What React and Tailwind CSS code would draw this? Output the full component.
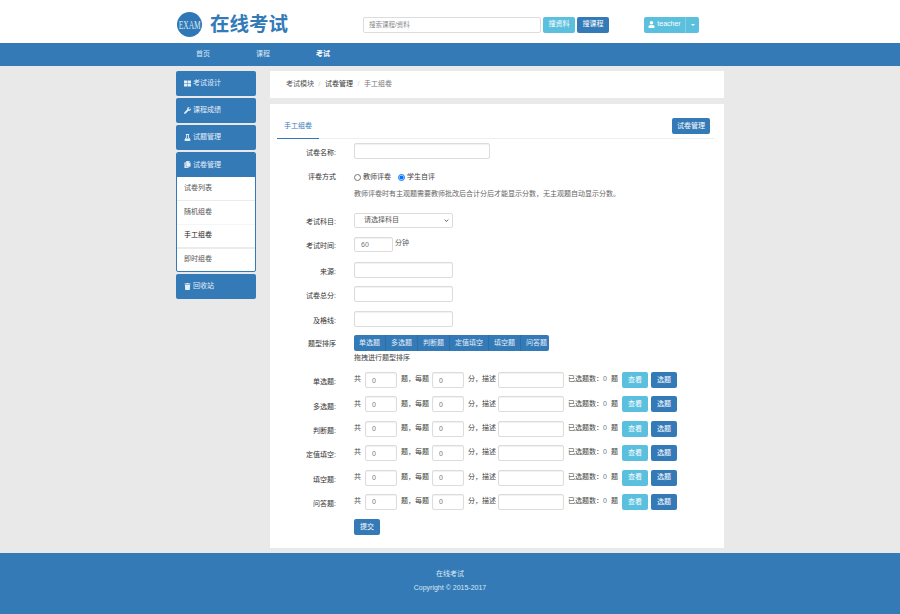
import React from 'react';
import { FaThLarge, FaWrench, FaFlask, FaCopy, FaTrash, FaUser } from 'react-icons/fa';

const types = ['单选题', '多选题', '判断题', '定值填空', '填空题', '问答题'];
const inputCls = 'h-4 rounded-[2px] border border-[#dcdcdc] bg-white px-[6px] text-[7px] text-[#777] shadow-[inset_0_1px_1px_rgba(0,0,0,0.06)] outline-none';
const sideBtn = 'flex h-[24.5px] items-center gap-[2px] rounded-[2px] bg-[#337ab7] pl-[7px] text-[7px] text-[#e4eef7]';
const infoBtn = 'flex h-4 items-center justify-center rounded-[2px] bg-[#5bc0de] text-[7px] text-white';
const primaryBtn = 'flex h-4 items-center justify-center rounded-[2px] bg-[#337ab7] text-[7px] text-white';

function SideItem({ icon, label }) {
    return (
        <div className={sideBtn}>
            <span className="flex w-[8px] justify-center text-[7px]">{icon}</span>
            <span>{label}</span>
        </div>
    );
}

function FormRow({ label, className, labelClass = 'pt-[4px]', children }) {
    return (
        <div className={'flex items-center ' + className}>
            <div className={'w-[66px] shrink-0 text-right text-[7px] text-[#333] ' + labelClass}>{label}</div>
            <div className="ml-[18px] flex items-center">{children}</div>
        </div>
    );
}

function TypeRow({ label }) {
    return (
        <div className="flex h-4 items-center text-[7px] text-[#444]">
            <div className="w-[66px] shrink-0 pt-[5px] text-right text-[#333]">{label}:</div>
            <div className="ml-[18px] flex items-center">
                <span className="w-[11px] pb-[1px]">共</span>
                <input className={inputCls + ' w-[32px]'} defaultValue="0" />
                <span className="ml-[4px] w-[31px] whitespace-nowrap pb-[1px]">{'题\uFF0C每题'}</span>
                <input className={inputCls + ' w-[32px]'} defaultValue="0" />
                <span className="ml-[4px] w-[30px] whitespace-nowrap pb-[1px]">{'分\uFF0C描述'}</span>
                <input className={inputCls + ' w-[66px]'} />
                <span className="ml-[4px] flex w-[50px] whitespace-nowrap pb-[1px]">
                    <span className="w-[35px]">{'已选题数\uFF1A'}</span>
                    <span className="w-[8px] text-[#777]">0</span>
                    <span>题</span>
                </span>
                <button className={infoBtn + ' ml-[4px] w-[26px]'}>查看</button>
                <button className={primaryBtn + ' ml-[3px] w-[26px]'}>选题</button>
            </div>
        </div>
    );
}

export default function App() {
    return (
        <div className="flex h-[614px] flex-col overflow-hidden bg-[#e9e9e9] font-['Liberation_Sans','Noto_Sans_CJK_SC',sans-serif]">
            {/* 头部 */}
            <div className="h-[43px] bg-white">
                <div className="mx-auto flex w-[548px] items-center pt-[12px]">
                    <div className="ml-[1px] flex h-[25px] w-[25px] items-center justify-center overflow-hidden rounded-full bg-[#2f78b5]">
                        <span className="scale-x-[0.62] font-['Liberation_Serif',serif] text-[12px] leading-none text-[#dbe8f3]">EXAM</span>
                    </div>
                    <div className="ml-[8px] text-[19.5px] font-bold leading-[25px] text-[#337ab7]">在线考试</div>
                    <input
                        className="ml-[75px] h-4 w-[178px] rounded-[2px] border border-[#dcdcdc] bg-white px-[5px] text-[6.5px] text-[#777] placeholder:text-[#888]"
                        placeholder="搜索课程/资料"
                    />
                    <button className={infoBtn + ' ml-[2px] w-[32px]'}>搜资料</button>
                    <button className={primaryBtn + ' ml-[2px] w-[32px]'}>搜课程</button>
                    <div className="ml-[35px] flex h-4 w-[55px] rounded-[2px] bg-[#5bc0de] text-[7px] text-white">
                        <div className="flex w-[42px] items-center justify-center gap-[2px] border-r border-[#7fcfe6]">
                            <FaUser className="text-[7px]" />
                            <span>teacher</span>
                        </div>
                        <div className="flex flex-1 items-center justify-center">
                            <span className="border-x-[2px] border-t-[2px] border-x-transparent border-t-white" />
                        </div>
                    </div>
                </div>
            </div>

            {/* 导航 */}
            <div className="h-[23px] bg-[#337ab7]">
                <div className="mx-auto flex h-full w-[548px] items-center text-[7px] text-[#dbe8f3]">
                    <div className="ml-[-3px] w-[60px] text-center">首页</div>
                    <div className="w-[60px] text-center">课程</div>
                    <div className="w-[60px] text-center font-bold text-white">考试</div>
                </div>
            </div>

            <div className="mx-auto mt-[5px] flex w-[548px] gap-[14px]">
                {/* 左侧菜单 */}
                <div className="flex w-[80px] flex-col gap-[2.5px]">
                    <SideItem icon={<FaThLarge />} label="考试设计" />
                    <SideItem icon={<FaWrench />} label="课程成绩" />
                    <SideItem icon={<FaFlask />} label="试题管理" />
                    <div className="overflow-hidden rounded-[2px] border border-[#337ab7] bg-white">
                        <div className="flex h-[23.5px] items-center gap-[2px] bg-[#337ab7] pl-[6px] text-[7px] text-[#e4eef7]">
                            <span className="flex w-[8px] justify-center text-[7px]"><FaCopy /></span>
                            <span>试卷管理</span>
                        </div>
                        <div className="flex h-[24px] items-center border-b border-[#ececec] pl-[7px] text-[7px] text-[#555]">试卷列表</div>
                        <div className="flex h-[24px] items-center border-b border-[#f5f5f5] pl-[7px] text-[7px] text-[#555]">随机组卷</div>
                        <div className="flex h-[24px] items-center border-b-2 border-[#ececec] pl-[7px] text-[7px] text-[#222]">手工组卷</div>
                        <div className="flex h-[22px] items-center pl-[7px] text-[7px] text-[#555]">即时组卷</div>
                    </div>
                    <SideItem icon={<FaTrash />} label="回收站" />
                </div>

                <div className="flex w-[454px] flex-col gap-[6px]">
                    {/* 面包屑 */}
                    <div className="flex h-[27px] items-center gap-[4.5px] bg-white pl-[16px] text-[7px] text-[#555]">
                        <span>考试模块</span>
                        <span className="text-[#ccc]">/</span>
                        <span className="text-[#333]">试卷管理</span>
                        <span className="text-[#ccc]">/</span>
                        <span className="text-[#777]">手工组卷</span>
                    </div>

                    <div className="bg-white pb-[13px] pt-[13px]">
                        {/* 标签页 */}
                        <div className="ml-[7px] mr-[9px] flex h-[22px] items-start justify-between border-b border-[#eee]">
                            <div className="flex h-[22px] w-[42px] items-center justify-center border-b border-[#337ab7] pb-[2px] text-[7px] text-[#337ab7]">手工组卷</div>
                            <button className={primaryBtn + ' mr-[5px] mt-[1px] w-[38px]'}>试卷管理</button>
                        </div>

                        <FormRow label="试卷名称:" className="mt-[4px]">
                            <input className={inputCls + ' w-[136px]'} />
                        </FormRow>
                        <FormRow label="评卷方式" labelClass="" className="mt-[12px] h-3">
                            <label className="flex items-center gap-[2px] text-[7px] text-[#444]">
                                <input type="radio" name="mode" className="m-0 h-[7px] w-[7px]" />
                                教师评卷
                            </label>
                            <label className="ml-[7px] flex items-center gap-[2px] text-[7px] text-[#444]">
                                <input type="radio" name="mode" defaultChecked className="m-0 h-[7px] w-[7px]" />
                                学生自评
                            </label>
                        </FormRow>
                        <div className="ml-[84px] mt-[5px] flex h-3 items-center whitespace-nowrap text-[7px] text-[#666]">
                            {'教师评卷时有主观题需要教师批改后合计分后才能显示分数\uFF0C无主观题自动显示分数。'}
                        </div>
                        <FormRow label="考试科目:" className="mt-[13px]">
                            <div className="relative">
                                <select className="block h-[15px] w-[99px] appearance-none rounded-[2px] border border-[#dcdcdc] bg-white pl-[9px] text-[7px] text-[#555]">
                                    <option>请选择科目</option>
                                </select>
                                <svg viewBox="0 0 8 5" className="pointer-events-none absolute right-[4px] top-[6px] h-[3px] w-[5px]" fill="none" stroke="#444" strokeWidth="1.4">
                                    <path d="M1 1l3 3 3-3" />
                                </svg>
                            </div>
                        </FormRow>
                        <FormRow label="考试时间:" className="mt-[9px]">
                            <input className={inputCls + ' h-[15px] w-[39px]'} defaultValue="60" />
                            <span className="ml-[2px] pb-[2px] text-[7px] text-[#555]">分钟</span>
                        </FormRow>
                        <FormRow label="来源:" className="mt-[10px]">
                            <input className={inputCls + ' w-[99px]'} />
                        </FormRow>
                        <FormRow label="试卷总分:" className="mt-[8px]">
                            <input className={inputCls + ' w-[99px]'} />
                        </FormRow>
                        <FormRow label="及格线:" className="mt-[9px]">
                            <input className={inputCls + ' w-[99px]'} />
                        </FormRow>
                        <FormRow label="题型排序" labelClass="pt-[2px]" className="mt-[8px]">
                            <div className="flex h-4 w-[195px] items-center rounded-[2px] bg-[#337ab7] text-[7px] text-[#e4eef7]">
                                {types.map((t) => (
                                    <div key={t} className="flex h-full grow items-center justify-center whitespace-nowrap border-r border-[#2e6da4] px-[5px] last:border-r-0">
                                        {t}
                                    </div>
                                ))}
                            </div>
                        </FormRow>
                        <div className="ml-[84px] mt-[1px] flex h-3 items-center text-[7px] text-[#444]">拖拽进行题型排序</div>

                        <div className="mt-[8px] flex flex-col gap-[8.4px]">
                            {types.map((t) => (
                                <TypeRow key={t} label={t} />
                            ))}
                        </div>

                        <button className={primaryBtn + ' ml-[84px] mt-[9px] w-[26px]'}>提交</button>
                    </div>
                </div>
            </div>

            {/* 页脚 */}
            <div className="mt-[5px] flex h-[61px] flex-col items-center bg-[#337ab7] pt-[14px] text-[#dbe8f3]">
                <div className="text-[7px] leading-[14px]">在线考试</div>
                <div className="text-[7px] leading-[14px]">Copyright © 2015-2017</div>
            </div>
        </div>
    );
}
